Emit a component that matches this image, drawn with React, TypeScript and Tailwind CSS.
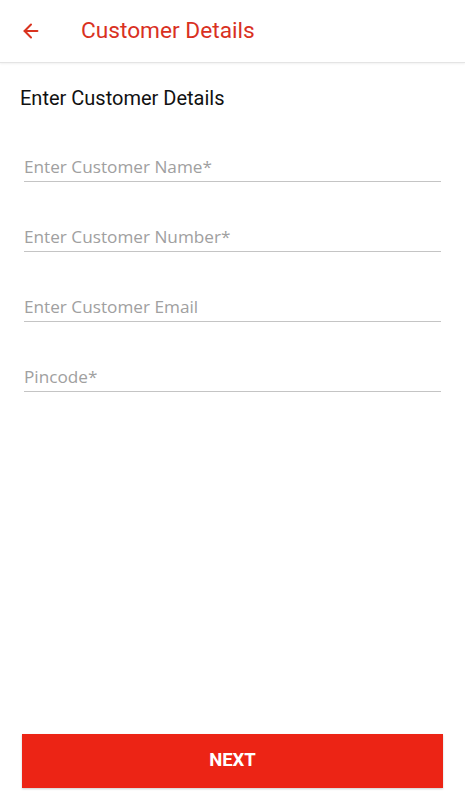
import { ArrowLeft } from "lucide-react";

const fields = [
  "Enter Customer Name*",
  "Enter Customer Number*",
  "Enter Customer Email",
  "Pincode*",
];

export default function App() {
  return (
    <div className="w-[465px] h-[800px] bg-white flex flex-col font-['Roboto',sans-serif]">
      <header className="h-[63px] flex items-center border-b border-[#e4e4e4] shadow-[0_1px_2px_rgba(0,0,0,0.06)] shrink-0">
        <ArrowLeft className="ml-[20px] w-[22px] h-[22px] text-[#d9331f]" strokeWidth={2.2} />
        <h1 className="ml-[39px] text-[22.7px] text-[#d9311f] leading-none">Customer Details</h1>
      </header>

      <h2 className="mt-[23px] ml-[20px] text-[20px] text-[#111] leading-[24px]">Enter Customer Details</h2>

      <div className="flex flex-col mx-[24px] mt-[22px] gap-[20px]">
        {fields.map((f) => (
          <div key={f} className="h-[50px] flex items-end border-b border-[#c4c4c4] pb-[3px]">
            <span className="text-[17.2px] text-[#a0a0a0] font-['Open_Sans',sans-serif] leading-[22px]">{f}</span>
          </div>
        ))}
      </div>

      <div className="flex-1" />

      <button className="mx-[22px] mb-[12px] h-[54px] bg-[#ec2415] text-white font-bold text-[18.5px] shadow-[0_1px_2px_rgba(0,0,0,0.2)]">
        NEXT
      </button>
    </div>
  );
}
